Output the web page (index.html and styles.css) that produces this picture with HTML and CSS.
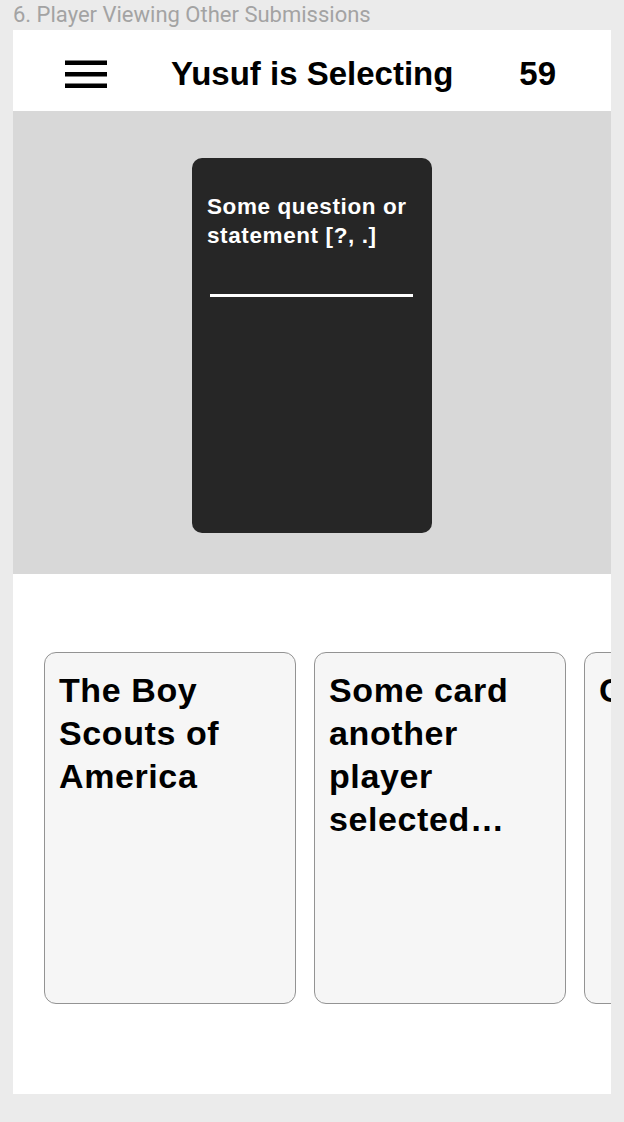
FILE: index.html
```html
<!DOCTYPE html>
<html>
<head>
<meta charset="utf-8">
<link rel="stylesheet" href="styles.css">
</head>
<body>
<div class="label">6. Player Viewing Other Submissions</div>
<div class="frame">
  <header class="header">
    <svg class="menu" width="42" height="28" viewBox="0 0 42 28">
      <rect x="0" y="0.5" width="42" height="4.5" fill="#000"/>
      <rect x="0" y="12" width="42" height="4.5" fill="#000"/>
      <rect x="0" y="23.5" width="42" height="4.5" fill="#000"/>
    </svg>
    <div class="title">Yusuf is Selecting</div>
    <div class="timer">59</div>
  </header>
  <section class="stage">
    <div class="black-card">
      <div class="question">Some question or statement [?, .]</div>
      <div class="blank"></div>
    </div>
  </section>
  <section class="hand">
    <div class="white-card">The Boy Scouts of America</div>
    <div class="white-card">Some card another player selected…</div>
    <div class="white-card">Card</div>
  </section>
</div>
</body>
</html>
```

FILE: styles.css
```css
html, body {
  margin: 0;
  padding: 0;
  background: #ebebeb;
}
body {
  width: 624px;
  height: 1122px;
  overflow: hidden;
}
.label {
  font-family: Roboto, "Liberation Sans", sans-serif;
  font-size: 22px;
  line-height: 30px;
  height: 30px;
  color: #a3a3a3;
  padding-left: 13px;
  white-space: nowrap;
}
.frame {
  margin-left: 13px;
  width: 598px;
  height: 1064px;
  background: #ffffff;
  overflow: hidden;
  font-family: "Liberation Sans", Arial, sans-serif;
}
.header {
  height: 81px;
  box-sizing: border-box;
  display: flex;
  align-items: flex-start;
  padding: 24px 55px 0 52px;
  background: #fff;
}
.menu {
  display: block;
  margin-top: 6px;
  flex: none;
}
.title {
  margin-left: 64px;
  font-size: 33px;
  font-weight: 700;
  line-height: 40px;
  color: #000;
  white-space: nowrap;
}
.timer {
  margin-left: auto;
  font-size: 33px;
  font-weight: 700;
  line-height: 40px;
  color: #000;
}
.stage {
  height: 463px;
  background: #d8d8d8;
  box-sizing: border-box;
  padding-top: 47px;
  display: flex;
  justify-content: center;
}
.black-card {
  width: 240px;
  height: 375px;
  box-sizing: border-box;
  background: #262626;
  border-radius: 10px;
  padding: 35px 15px 0 15px;
}
.question {
  color: #fff;
  font-size: 22.5px;
  font-weight: 700;
  line-height: 28.5px;
  letter-spacing: 0.6px;
}
.blank {
  margin: 44px 4px 0 3px;
  height: 3px;
  background: #fff;
}
.hand {
  height: 520px;
  box-sizing: border-box;
  padding: 78px 0 0 31px;
  display: flex;
  gap: 18px;
  overflow: hidden;
}
.white-card {
  flex: none;
  width: 252px;
  height: 352px;
  box-sizing: border-box;
  border: 1.5px solid #939393;
  border-radius: 12px;
  background: #f6f6f6;
  padding: 16px 14px 0 14px;
  font-size: 34px;
  font-weight: 700;
  line-height: 43px;
  letter-spacing: 0.6px;
  color: #000;
}
```
